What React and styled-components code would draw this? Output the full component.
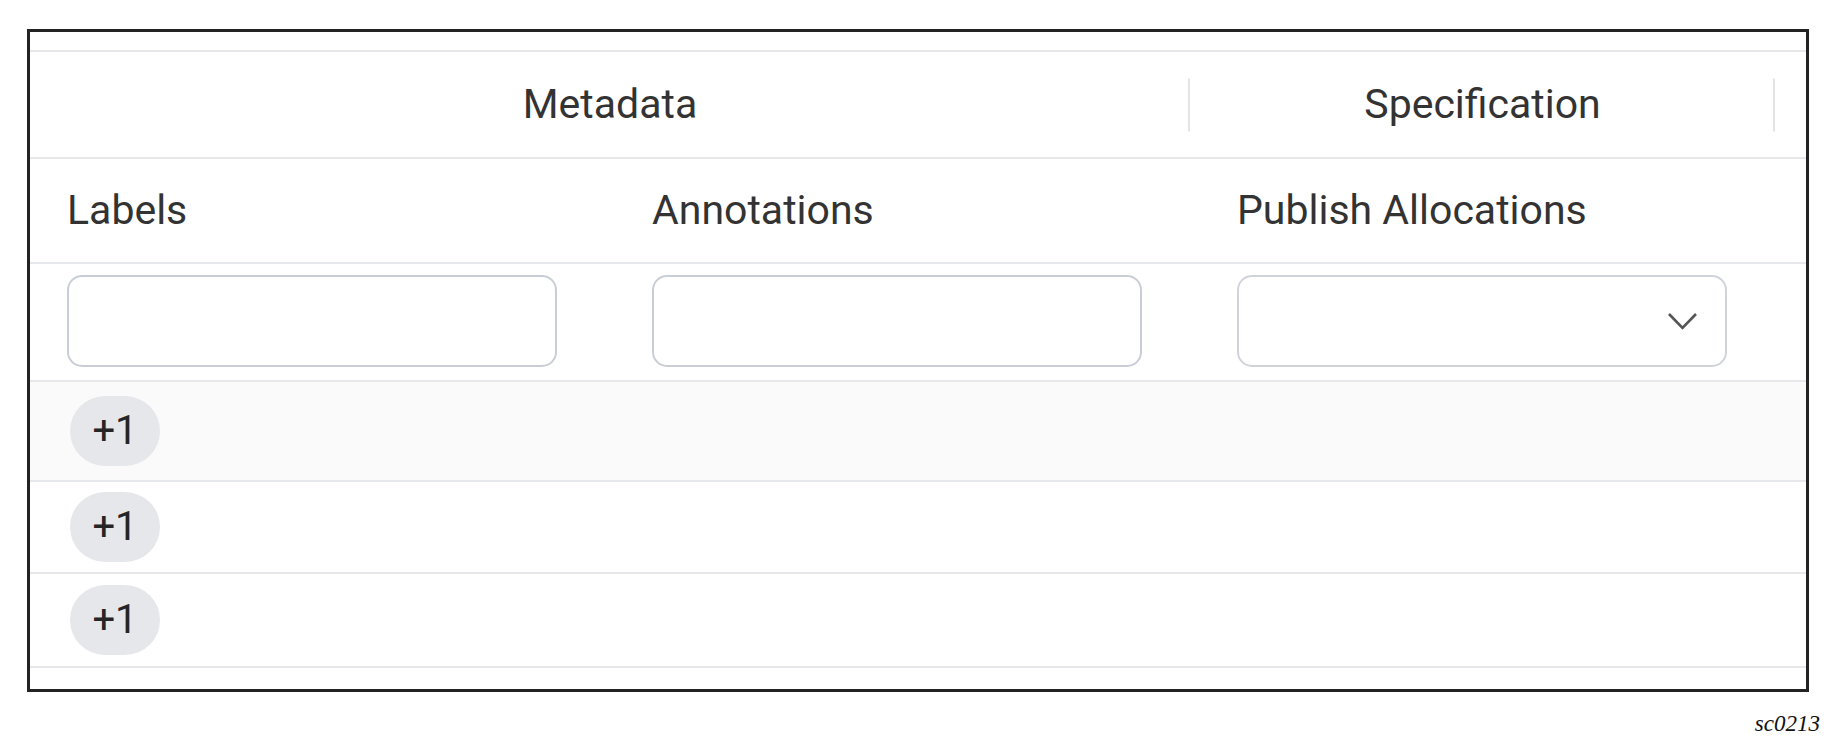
import React from 'react'
import styled, { createGlobalStyle } from 'styled-components'

const GlobalStyle = createGlobalStyle`
  html, body {
    margin: 0;
    padding: 0;
    background: #ffffff;
  }
  body {
    font-family: Roboto, "Noto Sans", sans-serif;
    color: #333333;
  }
`

const Frame = styled.div`
  margin: 29px 0 0 27px;
  width: 1782px;
  box-sizing: border-box;
  border: 3px solid #232323;
  background: #ffffff;
  padding: 18px 0 21px;
`

const HeaderRow = styled.div`
  display: grid;
  grid-template-columns: 1160px 585px 1fr;
  height: 105px;
  border-top: 2px solid #e6e8eb;
`

const HeaderCell = styled.div`
  position: relative;
  display: flex;
  align-items: center;
  justify-content: center;
  font-size: 41px;
  line-height: 1;
  color: #333333;

  &::after {
    content: '';
    display: ${(p) => (p.$divider ? 'block' : 'none')};
    position: absolute;
    right: 0;
    top: 50%;
    width: 2px;
    height: 53px;
    transform: translateY(-50%);
    background: #e4e4e4;
  }
`

const Row = styled.div`
  display: grid;
  grid-template-columns: 585px 585px 585px 1fr;
  height: ${(p) => p.$h}px;
  border-top: 2px solid #e6e8eb;
  border-bottom: ${(p) => (p.$last ? '2px solid #e6e8eb' : 'none')};
  background: ${(p) => (p.$shaded ? '#fafafa' : '#ffffff')};
`

const Cell = styled.div`
  display: flex;
  align-items: center;
  padding-left: 37px;
  font-size: 41px;
  line-height: 1;
  color: #333333;
`

const TextInput = styled.div`
  box-sizing: border-box;
  width: 490px;
  height: 92px;
  margin-top: -2px;
  border: 2px solid #c9ced6;
  border-radius: 15px;
  background: #ffffff;
`

const SelectBox = styled(TextInput)`
  display: flex;
  align-items: center;
  justify-content: flex-end;
  padding-right: 27px;
  border-color: #d0d4da;
`

const Badge = styled.span`
  display: inline-flex;
  align-items: center;
  justify-content: center;
  margin-left: 3px;
  width: 90px;
  height: 70px;
  border-radius: 35px;
  background: #e5e7eb;
  color: #252525;
  font-size: 40px;
  line-height: 1;
`

const Caption = styled.div`
  width: 1820px;
  margin-top: 19px;
  text-align: right;
  font-family: "Liberation Serif", "Times New Roman", serif;
  font-style: italic;
  font-size: 23px;
  line-height: 26px;
  color: #111111;
`

const Chevron = () => (
  <svg width="31" height="19" viewBox="0 0 31 19" fill="none">
    <polyline points="2,2 15.5,16 29,2" stroke="#555555" strokeWidth="2.6" />
  </svg>
)

const rows = [
  { h: 98, shaded: true },
  { h: 90 },
  { h: 92, last: true },
]

export default function App() {
  return (
    <>
      <GlobalStyle />
      <Frame>
        <HeaderRow>
          <HeaderCell $divider>Metadata</HeaderCell>
          <HeaderCell $divider>Specification</HeaderCell>
          <HeaderCell />
        </HeaderRow>
        <Row $h={103}>
          <Cell>Labels</Cell>
          <Cell>Annotations</Cell>
          <Cell>Publish Allocations</Cell>
          <Cell />
        </Row>
        <Row $h={116}>
          <Cell>
            <TextInput />
          </Cell>
          <Cell>
            <TextInput />
          </Cell>
          <Cell>
            <SelectBox>
              <Chevron />
            </SelectBox>
          </Cell>
          <Cell />
        </Row>
        {rows.map((r, i) => (
          <Row key={i} $h={r.h} $shaded={r.shaded} $last={r.last}>
            <Cell>
              <Badge>+1</Badge>
            </Cell>
            <Cell />
            <Cell />
            <Cell />
          </Row>
        ))}
      </Frame>
      <Caption>sc0213</Caption>
    </>
  )
}
